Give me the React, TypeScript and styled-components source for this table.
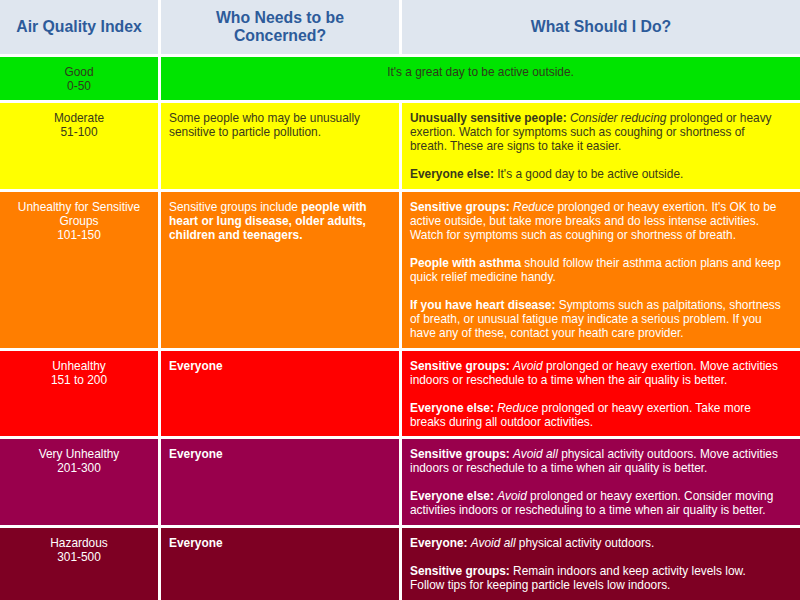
import React from "react";
import styled, { createGlobalStyle } from "styled-components";

const Global = createGlobalStyle`
  html, body { margin: 0; padding: 0; background: #ffffff; }
  body { font-family: "Liberation Sans", Arial, sans-serif; }
`;

const Table = styled.div`
  display: grid;
  grid-template-columns: 158px 238px 1fr;
  grid-template-rows: 54px 43px 86px 156px 85px 86px 72px;
  gap: 3px;
  width: 800px;
  height: 600px;
  overflow: hidden;
  background: #ffffff;
  font-family: "Liberation Sans", Arial, sans-serif;
`;

const HeaderCell = styled.div`
  background: #dfe6ef;
  color: #2d5b9a;
  font-weight: bold;
  font-size: 15.8px;
  line-height: 18px;
  display: flex;
  align-items: center;
  justify-content: center;
  text-align: center;
`;

const Cell = styled.div<{ $bg: string; $fg: string; $span?: number; $center?: boolean }>`
  background: ${(p) => p.$bg};
  color: ${(p) => p.$fg};
  grid-column: span ${(p) => p.$span ?? 1};
  font-size: 11.9px;
  line-height: 14px;
  padding: 8px 8px 0 8px;
  text-align: ${(p) => (p.$center ? "center" : "left")};
  white-space: nowrap;
  overflow: hidden;
`;

const Para = styled.p`
  margin: 0 0 14px 0;
  &:last-child { margin-bottom: 0; }
`;

type Row = {
  bg: string;
  fg: string;
  level: React.ReactNode;
  who?: React.ReactNode;
  what: React.ReactNode;
  merged?: boolean;
};

const rows: Row[] = [
  {
    bg: "#00e400",
    fg: "#2f3a1c",
    level: (<>Good<br />0-50</>),
    merged: true,
    what: <>It's a great day to be active outside.</>,
  },
  {
    bg: "#ffff00",
    fg: "#3a3a1a",
    level: (<>Moderate<br />51-100</>),
    who: (<>Some people who may be unusually<br />sensitive to particle pollution.</>),
    what: (
      <>
        <Para>
          <b>Unusually sensitive people:</b> <i>Consider reducing</i> prolonged or heavy<br />
          exertion. Watch for symptoms such as coughing or shortness of<br />
          breath. These are signs to take it easier.
        </Para>
        <Para><b>Everyone else:</b> It's a good day to be active outside.</Para>
      </>
    ),
  },
  {
    bg: "#ff7e00",
    fg: "#ffffff",
    level: (<>Unhealthy for Sensitive<br />Groups<br />101-150</>),
    who: (
      <>
        Sensitive groups include <b>people with</b><br />
        <b>heart or lung disease, older adults,</b><br />
        <b>children and teenagers.</b>
      </>
    ),
    what: (
      <>
        <Para>
          <b>Sensitive groups:</b> <i>Reduce</i> prolonged or heavy exertion. It's OK to be<br />
          active outside, but take more breaks and do less intense activities.<br />
          Watch for symptoms such as coughing or shortness of breath.
        </Para>
        <Para>
          <b>People with asthma</b> should follow their asthma action plans and keep<br />
          quick relief medicine handy.
        </Para>
        <Para>
          <b>If you have heart disease:</b> Symptoms such as palpitations, shortness<br />
          of breath, or unusual fatigue may indicate a serious problem. If you<br />
          have any of these, contact your heath care provider.
        </Para>
      </>
    ),
  },
  {
    bg: "#ff0000",
    fg: "#ffffff",
    level: (<>Unhealthy<br />151 to 200</>),
    who: <b>Everyone</b>,
    what: (
      <>
        <Para>
          <b>Sensitive groups:</b> <i>Avoid</i> prolonged or heavy exertion. Move activities<br />
          indoors or reschedule to a time when the air quality is better.
        </Para>
        <Para>
          <b>Everyone else:</b> <i>Reduce</i> prolonged or heavy exertion. Take more<br />
          breaks during all outdoor activities.
        </Para>
      </>
    ),
  },
  {
    bg: "#99004c",
    fg: "#ffffff",
    level: (<>Very Unhealthy<br />201-300</>),
    who: <b>Everyone</b>,
    what: (
      <>
        <Para>
          <b>Sensitive groups:</b> <i>Avoid all</i> physical activity outdoors. Move activities<br />
          indoors or reschedule to a time when air quality is better.
        </Para>
        <Para>
          <b>Everyone else:</b> <i>Avoid</i> prolonged or heavy exertion. Consider moving<br />
          activities indoors or rescheduling to a time when air quality is better.
        </Para>
      </>
    ),
  },
  {
    bg: "#7e0023",
    fg: "#ffffff",
    level: (<>Hazardous<br />301-500</>),
    who: <b>Everyone</b>,
    what: (
      <>
        <Para>
          <b>Everyone:</b> <i>Avoid all</i> physical activity outdoors.
        </Para>
        <Para>
          <b>Sensitive groups:</b> Remain indoors and keep activity levels low.<br />
          Follow tips for keeping particle levels low indoors.
        </Para>
      </>
    ),
  },
];

export default function App() {
  return (
    <>
      <Global />
      <Table>
        <HeaderCell>Air Quality Index</HeaderCell>
        <HeaderCell>Who Needs to be<br />Concerned?</HeaderCell>
        <HeaderCell>What Should I Do?</HeaderCell>
        {rows.map((r, i) => (
          <React.Fragment key={i}>
            <Cell $bg={r.bg} $fg={r.fg} $center>{r.level}</Cell>
            {r.merged ? (
              <Cell $bg={r.bg} $fg={r.fg} $span={2} $center>{r.what}</Cell>
            ) : (
              <>
                <Cell $bg={r.bg} $fg={r.fg}>{r.who}</Cell>
                <Cell $bg={r.bg} $fg={r.fg}>{r.what}</Cell>
              </>
            )}
          </React.Fragment>
        ))}
      </Table>
    </>
  );
}
